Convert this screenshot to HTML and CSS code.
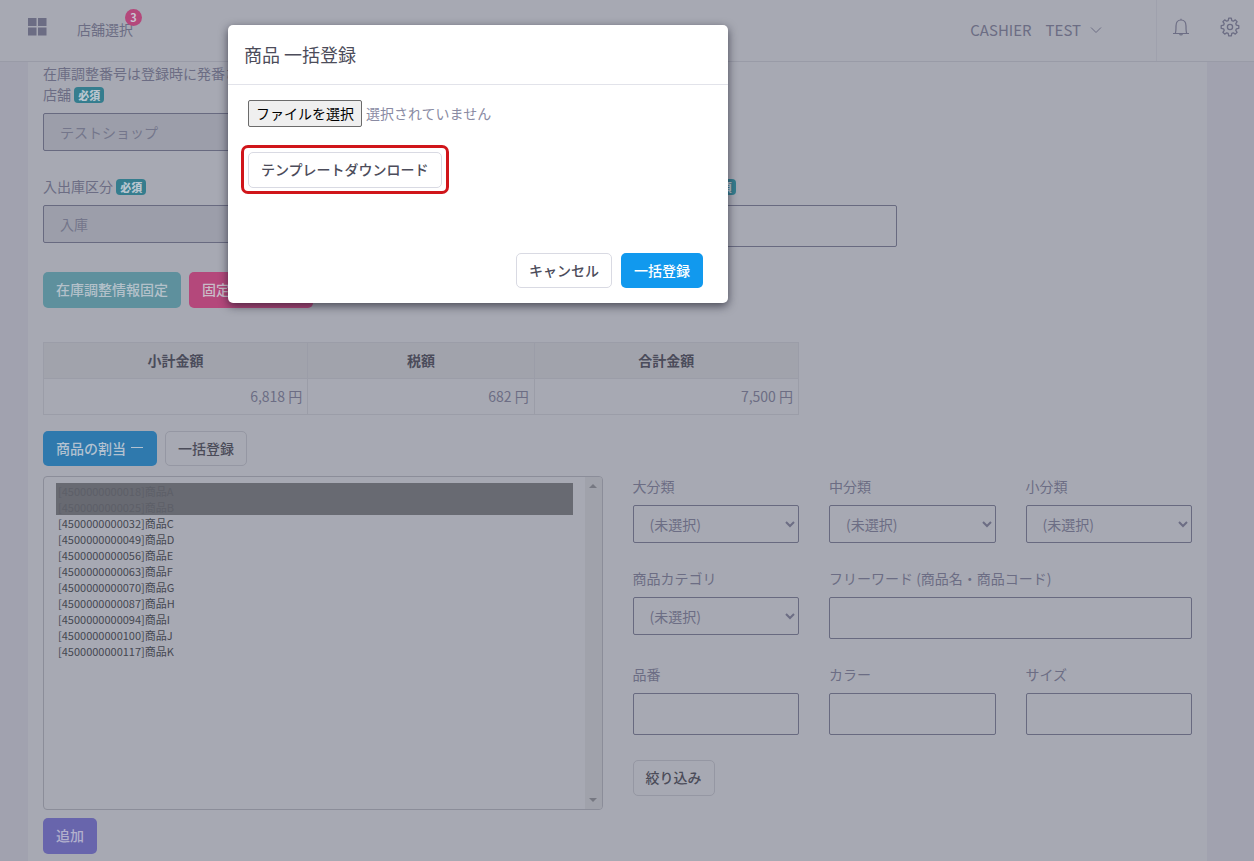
FILE: index.html
```html
<!DOCTYPE html>
<html lang="ja">
<head>
<meta charset="utf-8">
<title>商品 一括登録</title>
<link rel="stylesheet" href="styles.css">
</head>
<body>
<header class="topbar">
  <button class="icon-btn" type="button" aria-label="メニュー">
    <svg width="19" height="18" viewBox="0 0 19 18" fill="currentColor"><path d="M0 0h8.500v8H0zM10 0h8.500v8H10zM0 9.500h8.500v8H0zM10 9.500h8.500v8H10z"/></svg>
  </button>
  <a class="shop-link" href="#">店舗選択<span class="count">3</span></a>
  <button class="user" type="button"><span>CASHIER</span><span>TEST</span>
    <svg width="12" height="8" viewBox="0 0 12 8" fill="none" stroke="currentColor"><path d="M1 1.500l5 5 5-5"/></svg>
  </button>
  <div class="tools">
    <button class="icon-btn" type="button" aria-label="通知">
      <svg width="18" height="18" viewBox="0 0 18 18" fill="none" stroke="currentColor" stroke-width="1.2"><path d="M1 15.500h16M3.200 15.500c.8-1.300.8-3 .8-7.500C4 4.500 5.800 2 9 2s5 2.500 5 6c0 4.500 0 6.200.8 7.500M9 2V.8M7.500 16.200c.5 1 2.500 1 3 0"/></svg>
    </button>
    <button class="icon-btn" type="button" aria-label="設定">
      <svg width="20" height="20" viewBox="0 0 20 20" fill="none" stroke="currentColor" stroke-width="1.3" stroke-linejoin="round"><path d="M8.700 1.200h2.600l.5 2.400 1.500.6 2-1.300 1.800 1.800-1.300 2 .6 1.500 2.400.5v2.600l-2.400.5-.6 1.500 1.300 2-1.800 1.800-2-1.300-1.500.6-.5 2.400H8.700l-.5-2.400-1.500-.6-2 1.300-1.800-1.800 1.300-2-.6-1.500-2.400-.5V8.700l2.400-.5.6-1.500-1.300-2 1.800-1.800 2 1.300 1.500-.6z"/><circle cx="10" cy="10" r="2.600"/></svg>
    </button>
  </div>
</header>

<main class="panel">
  <p class="note">在庫調整番号は登録時に発番されます</p>
  <div class="grid-4">
    <div class="field">
      <label for="shop">店舗 <span class="req">必須</span></label>
      <select id="shop" disabled><option>テストショップ</option></select>
    </div>
  </div>
  <div class="grid-4">
    <div class="field">
      <label for="kind">入出庫区分 <span class="req">必須</span></label>
      <select id="kind" disabled><option>入庫</option></select>
    </div>
    <div class="field col-3">
      <label for="date">入出庫日時 <span class="req">必須</span></label>
      <input id="date" type="text">
    </div>
  </div>
  <div class="actions">
    <button class="btn teal" type="button">在庫調整情報固定</button>
    <button class="btn pink" type="button">固定情報を解除</button>
  </div>

  <table class="totals">
    <thead><tr><th class="wide">小計金額</th><th>税額</th><th class="wide">合計金額</th></tr></thead>
    <tbody><tr><td>6,818 円</td><td>682 円</td><td>7,500 円</td></tr></tbody>
  </table>

  <div class="actions tabs">
    <button class="btn blue" type="button">商品の割当 <svg width="14" height="14" viewBox="0 0 14 14" stroke="currentColor"><path d="M1 6.500h12"/></svg></button>
    <button class="btn plain" type="button">一括登録</button>
  </div>

  <div class="split">
    <section>
      <div class="picker">
        <select class="items" multiple aria-label="商品">
          <option selected>[4500000000018]商品A</option>
          <option selected>[4500000000025]商品B</option>
          <option>[4500000000032]商品C</option>
          <option>[4500000000049]商品D</option>
          <option>[4500000000056]商品E</option>
          <option>[4500000000063]商品F</option>
          <option>[4500000000070]商品G</option>
          <option>[4500000000087]商品H</option>
          <option>[4500000000094]商品I</option>
          <option>[4500000000100]商品J</option>
          <option>[4500000000117]商品K</option>
        </select>
        <div class="rail">
          <svg width="8" height="4" viewBox="0 0 8 4" fill="currentColor"><path d="M0 4l4-4 4 4z"/></svg>
          <svg width="8" height="4" viewBox="0 0 8 4" fill="currentColor"><path d="M0 0l4 4 4-4z"/></svg>
        </div>
      </div>
      <button class="btn purple" type="button">追加</button>
    </section>
    <section class="filters">
      <div class="field"><label for="large">大分類</label><select id="large"><option>(未選択)</option></select></div>
      <div class="field"><label for="middle">中分類</label><select id="middle"><option>(未選択)</option></select></div>
      <div class="field"><label for="small">小分類</label><select id="small"><option>(未選択)</option></select></div>
      <div class="field"><label for="category">商品カテゴリ</label><select id="category"><option>(未選択)</option></select></div>
      <div class="field span-2"><label for="word">フリーワード (商品名・商品コード)</label><input id="word" type="text"></div>
      <div class="field"><label for="number">品番</label><input id="number" type="text"></div>
      <div class="field"><label for="color">カラー</label><input id="color" type="text"></div>
      <div class="field"><label for="size">サイズ</label><input id="size" type="text"></div>
      <div><button class="btn plain" type="button">絞り込み</button></div>
    </section>
  </div>
</main>

<div class="modal" role="dialog" aria-labelledby="modal-title">
  <h2 id="modal-title" class="modal-title">商品 一括登録</h2>
  <div class="modal-body">
    <div class="file-row">
      <input class="file-input" id="file" type="file">
      <label class="file-btn" for="file">ファイルを選択</label>
      <span>選択されていません</span>
    </div>
    <div class="template">
      <button class="btn light" type="button">テンプレートダウンロード</button>
      <span class="marker"></span>
    </div>
  </div>
  <div class="modal-foot">
    <button class="btn light" type="button">キャンセル</button>
    <button class="btn primary" type="button">一括登録</button>
  </div>
</div>
</body>
</html>
```

FILE: styles.css
```css
* { box-sizing: border-box; }

body {
  margin: 0;
  min-height: 100vh;
  display: flex;
  flex-direction: column;
  background: #a1a2af;
  color: #6c6d84;
  font-family: "Noto Sans CJK JP", "Noto Sans", sans-serif;
  font-size: 14px;
  line-height: 21px;
}

button, input, select { font: inherit; color: inherit; }

.topbar {
  display: flex;
  align-items: center;
  height: 62px;
  padding: 0 0 2px 28px;
  background: #a7a9b3;
  border-bottom: 1px solid #999ba7;
}

.icon-btn {
  display: flex;
  padding: 0;
  margin-bottom: 5px;
  border: 0;
  background: none;
}

.shop-link {
  position: relative;
  margin-left: 30px;
  color: inherit;
  text-decoration: none;
}

.count {
  position: absolute;
  top: -10px;
  right: -9px;
  width: 17px;
  height: 17px;
  border-radius: 50%;
  background: #b4487b;
  color: #c9c3d0;
  font-size: 11px;
  font-weight: 700;
  line-height: 17px;
  text-align: center;
}

.user {
  display: flex;
  align-items: center;
  gap: 14px;
  margin-left: auto;
  padding: 0 54px 0 0;
  border: 0;
  background: none;
  font-size: 15px;
}

.user svg { margin-left: -5px; }

.tools {
  display: flex;
  align-items: center;
  gap: 30px;
  align-self: stretch;
  margin-bottom: -2px;
  padding: 0 14px 2px 15px;
  border-left: 1px solid #9fa1ad;
}

.panel {
  flex: 1;
  margin: 0 47px 0 28px;
  padding: 1px 15px 7px;
  background: #a7a9b3;
}

.note { margin: 0; }

.grid-4 {
  display: grid;
  grid-template-columns: repeat(4, 1fr);
  gap: 30px;
  margin-bottom: 25px;
}

.col-3 { grid-column: 3; }

.field label {
  display: block;
  margin-bottom: 8px;
}

.field select, .field input {
  display: block;
  width: 100%;
  height: 42px;
  padding: 0 12px;
  border: 1px solid #686a80;
  border-radius: 2px;
  background: transparent;
}

.field select {
  height: 38px;
  padding: 0 0 0 12px;
}

.field select:disabled {
  background: #9c9eaa;
  color: #74768b;
  opacity: 1;
}

.req {
  display: inline-block;
  padding: 0 4px;
  border-radius: 4px;
  background: #357d8e;
  color: #b9c5cf;
  font-size: 11px;
  font-weight: 900;
  line-height: 16px;
}

.actions {
  display: flex;
  gap: 8px;
}

.btn {
  display: inline-flex;
  align-items: center;
  gap: 4px;
  height: 36px;
  padding: 0 12px 1px;
  border: 1px solid transparent;
  border-radius: 5px;
  font-weight: 500;
  white-space: nowrap;
}

.teal { background: #5e909d; color: #b4c1ca; }
.pink { background: #b4487b; color: #c9bcc8; }
.blue { background: #2f79ad; color: #b2c1d0; }
.purple { background: #6865ac; color: #b2b0cc; }
.plain { background: transparent; border-color: #9597a3; color: #4b4c59; }
.light { background: #fff; border-color: #d9dae3; color: #4c4c5a; }
.primary { background: #1199ee; color: #fff; }

.totals {
  width: calc((100% + 30px) * 2 / 3 - 30px);
  margin: 34px 0 16px;
  border-collapse: collapse;
  table-layout: fixed;
}

.totals th, .totals td {
  height: 36px;
  padding: 0 5px;
  border: 1px solid #9b9da8;
}

.totals th {
  background: #a1a3ac;
  color: #4b4c5b;
  font-weight: 700;
}

.totals td { text-align: right; }
.wide { width: 35%; }

.tabs { margin-bottom: 10px; }
.tabs .btn, .modal-foot .btn { height: 35px; }

.split {
  display: grid;
  grid-template-columns: 1fr 1fr;
  gap: 30px;
}

.picker {
  display: flex;
  height: 334px;
  margin-bottom: 8px;
  border: 1px solid #8b8d99;
  border-radius: 4px;
  overflow: hidden;
}

.items {
  flex: 1;
  min-width: 0;
  padding: 6px 12px;
  border: 0;
  background: transparent;
  color: #454751;
  font-size: 11px;
}

.items option {
  height: 16px;
  min-height: 16px;
  padding: 0 2px;
  line-height: 15px;
}

.items option:checked {
  background: #686a72 linear-gradient(#686a72, #686a72);
  color: #5d5f68;
}

.rail {
  display: flex;
  flex-direction: column;
  align-items: center;
  justify-content: space-between;
  width: 17px;
  padding: 7px 0;
  background: #a0a2ab;
  color: #767882;
}

.filters {
  display: grid;
  grid-template-columns: repeat(3, 1fr);
  gap: 25px 30px;
  align-content: start;
}

.span-2 { grid-column: span 2; }

.modal {
  position: absolute;
  top: 25px;
  left: 228px;
  width: 500px;
  border-radius: 5px;
  background: #fff;
  box-shadow: 0 3px 10px rgba(20, 20, 35, 0.65);
  color: #8a8ba3;
}

.modal-title {
  margin: 0;
  padding: 15px 16px 16px;
  border-bottom: 1px solid #e2e3ea;
  color: #4c4c5a;
  font-size: 18px;
  font-weight: 400;
  line-height: 28px;
}

.modal-body { padding: 15px 20px 65px; }

.file-row {
  display: flex;
  align-items: center;
  gap: 4px;
  margin-bottom: 25px;
}

.file-input {
  position: absolute;
  width: 1px;
  height: 1px;
  opacity: 0;
}

.file-btn {
  padding: 2px 7px;
  border: 1px solid #6b6b6b;
  border-radius: 2px;
  background: #efefef;
  color: #000;
  line-height: 21px;
}

.template {
  position: relative;
  display: flex;
  width: fit-content;
}

.marker {
  position: absolute;
  inset: -7px -7px -6px;
  border: 3px solid #d0151a;
  border-radius: 7px;
  pointer-events: none;
}

.modal-foot {
  display: flex;
  justify-content: flex-end;
  gap: 9px;
  padding: 0 25px 15px;
}
```
